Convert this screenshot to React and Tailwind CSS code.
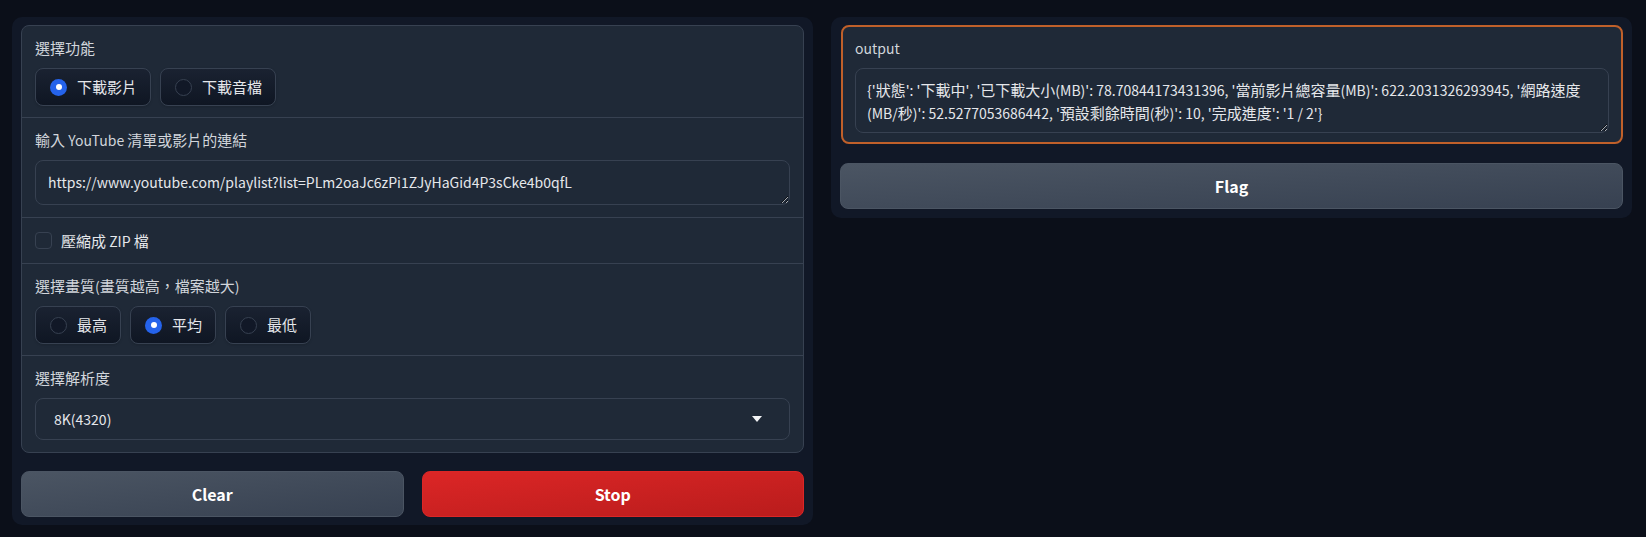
import React from 'react';

const font = { fontFamily: '"Noto Sans CJK TC", "Noto Sans", sans-serif' };

// CJK glyphs render a touch larger than the Latin ones in the reference
function Mixed({ text }) {
  const parts = text.split(/([\u3000-\u9fff\uff00-\uffef]+)/).filter(Boolean);
  return parts.map((p, i) =>
    /[\u3000-\u9fff\uff00-\uffef]/.test(p) ? (
      <span key={i} className="text-[15px]">{p}</span>
    ) : (
      <span key={i} className="text-[14px]">{p}</span>
    )
  );
}

function Radio({ label, checked }) {
  return (
    <label className="flex items-center gap-[10px] h-[38px] pl-[14px] pr-[13px] rounded-lg border border-[#374151] bg-gradient-to-t from-[#0f1623] to-[#1a2231] text-[15px] text-[#e5e7eb] shadow-sm">
      {checked ? (
        <span className="w-[17px] h-[17px] rounded-full bg-[#2563eb] flex items-center justify-center">
          <span className="w-[6px] h-[6px] rounded-full bg-white" />
        </span>
      ) : (
        <span className="w-[17px] h-[17px] rounded-full border border-[#374151] bg-[#111827]" />
      )}
      <span>{label}</span>
    </label>
  );
}

function Label({ children }) {
  return (
    <div className="text-[15px] leading-5 text-[#d1d5db]">
      <Mixed text={children} />
    </div>
  );
}

export default function App() {
  const output =
    "{'狀態': '下載中', '已下載大小(MB)': 78.70844173431396, '當前影片總容量(MB)': 622.2031326293945, '網路速度(MB/秒)': 52.5277053686442, '預設剩餘時間(秒)': 10, '完成進度': '1 / 2'}";

  return (
    <div style={font} className="min-h-[537px] bg-[#0b0f19] flex items-start gap-[18px] pl-3 pr-[14px] pt-[17px]">
      {/* left column */}
      <div className="flex-1 rounded-[10px] bg-[#111827] px-[9px] pt-2 pb-2">
        <div className="rounded-lg border border-[#374151] bg-[#1f2937]">
          <div className="px-[13px] pt-3 pb-[11px]">
            <Label>選擇功能</Label>
            <div className="flex gap-[9px] mt-[10px]">
              <Radio label="下載影片" checked />
              <Radio label="下載音檔" />
            </div>
          </div>

          <div className="border-t border-[#374151] px-[13px] pt-3 pb-3">
            <Label>輸入 YouTube 清單或影片的連結</Label>
            <textarea
              rows={1}
              readOnly
              defaultValue="https://www.youtube.com/playlist?list=PLm2oaJc6zPi1ZJyHaGid4P3sCke4b0qfL"
              className="mt-[10px] block w-full h-[45px] resize-y [color-scheme:dark] rounded-lg border border-[#374151] bg-[#1f2937] px-3 py-[11px] text-[14px] leading-5 text-[#e5e7eb] outline-none"
            />
          </div>

          <div className="border-t border-[#374151] px-[13px] h-[46px] flex items-center gap-[9px]">
            <span className="w-[17px] h-[17px] rounded-[4px] border border-[#374151] bg-[#1f2937]" />
            <span className="text-[#e5e7eb]">
              <Mixed text="壓縮成 ZIP 檔" />
            </span>
          </div>

          <div className="border-t border-[#374151] px-[13px] pt-3 pb-[11px]">
            <Label>選擇畫質(畫質越高，檔案越大)</Label>
            <div className="flex gap-[9px] mt-[10px]">
              <Radio label="最高" />
              <Radio label="平均" checked />
              <Radio label="最低" />
            </div>
          </div>

          <div className="border-t border-[#374151] px-[13px] pt-3 pb-3">
            <Label>選擇解析度</Label>
            <div className="mt-[10px] h-[42px] rounded-lg border border-[#374151] bg-[#1f2937] flex items-center justify-between pl-[18px] pr-[27px]">
              <span className="text-[14px] text-[#e5e7eb]">8K(4320)</span>
              <svg width="10" height="6" viewBox="0 0 10 6">
                <path d="M0 0 H10 L5 6 Z" fill="#f3f4f6" />
              </svg>
            </div>
          </div>
        </div>

        <div className="flex gap-[18px] mt-[18px]">
          <button className="flex-1 h-[46px] rounded-lg border border-[#4b5563] bg-gradient-to-br from-[#4b5563] to-[#374151] text-white text-[16px] font-semibold">
            Clear
          </button>
          <button className="flex-1 h-[46px] rounded-lg border border-[#dc2626] bg-gradient-to-br from-[#dc2626] to-[#b91c1c] text-white text-[16px] font-semibold">
            Stop
          </button>
        </div>
      </div>

      {/* right column */}
      <div className="flex-1 rounded-[10px] bg-[#111827] pl-[9px] pr-[9px] pt-2 pb-[9px]">
        <div className="rounded-lg border-2 border-[#c0602a] bg-[#1f2937] px-[12px] pt-[11px] pb-[9px] ml-px">
          <div className="text-[14px] leading-5 text-[#d1d5db]">output</div>
          <div className="mt-[10px] h-[65px] overflow-auto resize-y [color-scheme:dark] rounded-lg border border-[#374151] bg-[#1f2937] px-[11px] pt-[9px] leading-[22px] text-[#e5e7eb]">
            <Mixed text={output} />
          </div>
        </div>
        <button className="mt-[19px] w-full h-[46px] rounded-lg border border-[#4b5563] bg-gradient-to-br from-[#4b5563] to-[#374151] text-white text-[16px] font-semibold">
          Flag
        </button>
      </div>
    </div>
  );
}
